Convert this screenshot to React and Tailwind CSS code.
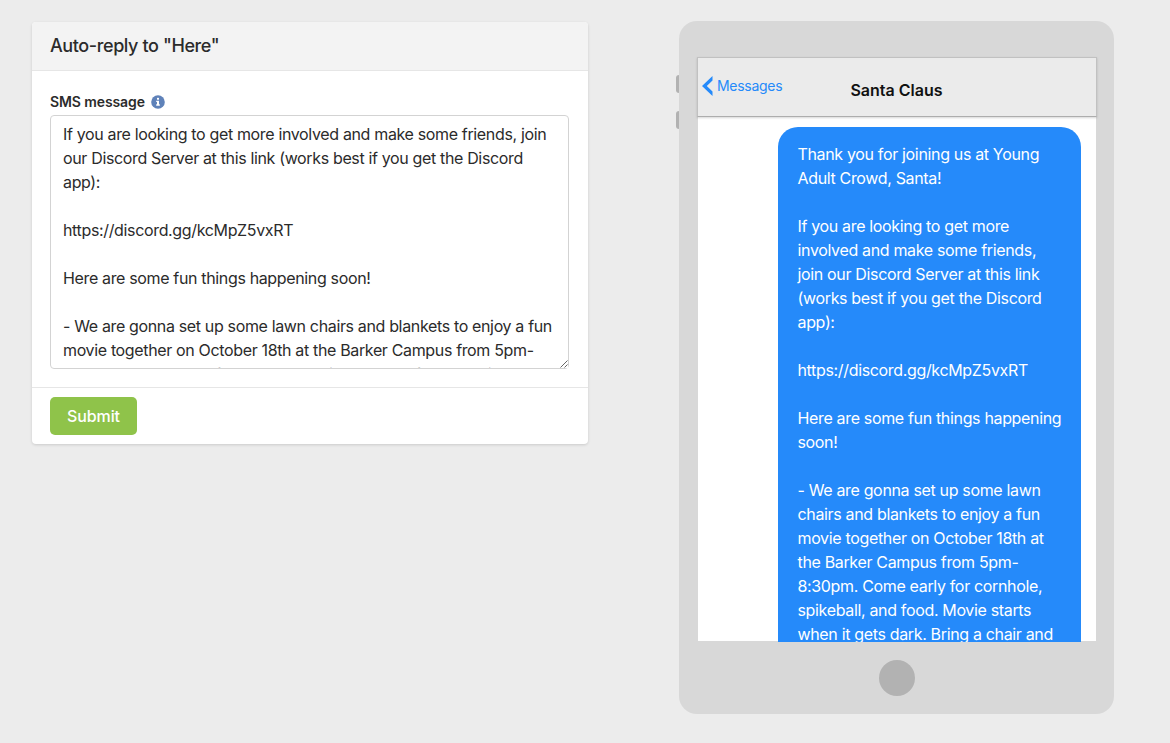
const smsMessage = `If you are looking to get more involved and make some friends, join
our Discord Server at this link (works best if you get the Discord
app):

https://discord.gg/kcMpZ5vxRT

Here are some fun things happening soon!

- We are gonna set up some lawn chairs and blankets to enjoy a fun
movie together on October 18th at the Barker Campus from 5pm-
8:30pm. Come early for cornhole, spikeball, and food. Movie starts`;

const previewMessage = `Thank you for joining us at Young
Adult Crowd, Santa!

If you are looking to get more
involved and make some friends,
join our Discord Server at this link
(works best if you get the Discord
app):

https://discord.gg/kcMpZ5vxRT

Here are some fun things happening
soon!

- We are gonna set up some lawn
chairs and blankets to enjoy a fun
movie together on October 18th at
the Barker Campus from 5pm-
8:30pm. Come early for cornhole,
spikeball, and food. Movie starts
when it gets dark. Bring a chair and`;

function InfoIcon() {
  return (
    <svg viewBox="0 0 14 14" className="size-[14px]" aria-hidden="true">
      <circle cx="7" cy="7" r="6.8" fill="#5f82b9" />
      <rect x="6" y="2.8" width="2" height="2" rx="0.6" fill="#fff" />
      <path d="M5.2 5.7H8v3.6h.8v1.4H5.2V9.3H6V7.1h-.8z" fill="#fff" />
    </svg>
  );
}

function ReplyForm() {
  return (
    <form className="flex h-[422px] w-[555.5px] flex-col overflow-hidden rounded bg-white shadow-[0_1px_3px_rgba(0,0,0,0.14)]">
      <header className="flex h-[49px] shrink-0 items-center border-b border-[#e6e6e6] bg-[#f3f3f3] px-[18px]">
        <h1 className="text-[18px] font-medium leading-6 tracking-[-0.4px]">Auto-reply to "Here"</h1>
      </header>
      <div className="h-[316px] shrink-0 px-[18px] pt-[18px]">
        <label htmlFor="sms" className="flex h-[26px] items-center gap-[6px] text-[14px] font-semibold tracking-[-0.1px]">
          <span className="-mt-[2px]">SMS message</span>
          <InfoIcon />
        </label>
        <div className="relative h-[254px] w-[519px]">
          <textarea
            id="sms"
            defaultValue={smsMessage}
            className="block size-full resize-none overflow-hidden whitespace-pre rounded-[4px] border border-[#d3d3d3] bg-white px-[12px] py-[6px] text-[16px] leading-6 tracking-[-0.35px] outline-none"
          />
          <svg viewBox="0 0 8 8" className="absolute bottom-[1px] right-[1px] size-[8px] bg-white" aria-hidden="true">
            <path d="M.5 7.5l7-7M4.5 7.5l3-3" stroke="#555" strokeWidth="0.9" />
          </svg>
        </div>
      </div>
      <footer className="flex flex-1 items-center border-t border-[#e6e6e6] px-[18px]">
        <button type="button" className="h-[38px] w-[87px] rounded-[5px] bg-[#8fc34a] text-[16px] font-medium tracking-[-0.1px] text-white">
          Submit
        </button>
      </footer>
    </form>
  );
}

function PhonePreview() {
  return (
    <section className="relative flex h-[693px] w-[435px] flex-col items-center rounded-[18px] bg-[#d8d8d8] pt-[36px]">
      <span className="absolute -left-[3px] top-[54px] h-[18px] w-[3px] rounded-l-[3px] bg-[#b2b2b2]" />
      <span className="absolute -left-[3px] top-[90px] h-[18px] w-[3px] rounded-l-[3px] bg-[#b2b2b2]" />
      <div className="flex h-[585px] w-[400px] flex-col">
        <header className="relative z-10 grid h-[60px] shrink-0 grid-cols-[1fr_auto_1fr] border border-b-[#adadad] border-x-[#c1c1c1] border-t-[#c1c1c1] bg-[#ebebeb] shadow-[0_1px_2px_rgba(0,0,0,0.16)]">
          <a className="flex h-[56px] items-center gap-[4px] pl-[4.5px] text-[14px] tracking-[-0.28px] text-[#258afa]">
            <svg viewBox="0 0 11 20" className="h-[20px] w-[11px]" aria-hidden="true">
              <path d="M10.5 0v4.5L4.8 10l5.7 5.5V20L0 10z" fill="#258afa" />
            </svg>
            <span className="-mt-px">Messages</span>
          </a>
          <h2 className="pt-[20px] text-[16px] font-semibold leading-6 tracking-[0px] text-[#111]">Santa Claus</h2>
        </header>
        <div className="mx-px flex h-[524px] justify-end bg-white pr-[15px] pt-[10px]">
          <div className="h-[515px] w-[303px] overflow-hidden whitespace-pre rounded-t-[20px] bg-[#258afa] pl-[20px] pt-[15px] text-[16px] leading-6 tracking-[-0.34px] text-white">
            {previewMessage}
          </div>
        </div>
      </div>
      <div className="mt-[18px] size-[36px] rounded-full bg-[#b2b2b2]" />
    </section>
  );
}

export default function App() {
  return (
    <main className="flex h-[743px] items-start overflow-hidden bg-[#ececec] pl-[32px] pt-[21px] font-['Inter',sans-serif] text-[#2b2b2b]">
      <div className="mr-[91.5px] pt-px">
        <ReplyForm />
      </div>
      <PhonePreview />
    </main>
  );
}
